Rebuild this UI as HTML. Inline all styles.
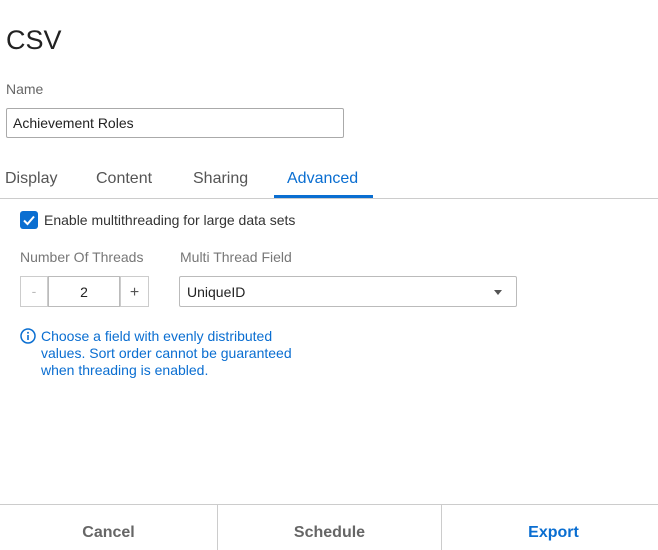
<!DOCTYPE html>
<html><head><style>
body{margin:0;width:658px;height:550px;background:#fff;font-family:"Liberation Sans",sans-serif;position:relative;overflow:hidden;color:#222}
.a{position:absolute;white-space:nowrap}
</style></head><body>
<div class="a" style="left:6px;top:25px;font-size:27px;color:#222">CSV</div>
<div class="a" style="left:6px;top:81px;font-size:14px;color:#666">Name</div>
<div class="a" style="left:6px;top:108px;width:336px;height:28px;border:1px solid #aaa;border-radius:2px"></div>
<div class="a" style="left:13px;top:115px;font-size:14px;color:#222">Achievement Roles</div>
<div class="a" style="left:5px;top:170px;font-size:16px;color:#555">Display</div>
<div class="a" style="left:96px;top:170px;font-size:16px;color:#555">Content</div>
<div class="a" style="left:193px;top:170px;font-size:16px;color:#555">Sharing</div>
<div class="a" style="left:287px;top:170px;font-size:16px;color:#0a6ed1">Advanced</div>
<div class="a" style="left:0;top:198px;width:658px;height:1px;background:#ccc"></div>
<div class="a" style="left:274px;top:195px;width:99px;height:3px;background:#0a6ed1"></div>
<div class="a" style="left:20px;top:211px;width:18px;height:18px;background:#0a6ed1;border-radius:3px"><svg width="18" height="18"><path d="M4 9.5l3.5 3.5L14 5.5" stroke="#fff" stroke-width="2" fill="none"/></svg></div>
<div class="a" style="left:44px;top:212px;font-size:14px;color:#333">Enable multithreading for large data sets</div>
<div class="a" style="left:20px;top:249px;font-size:14px;color:#777">Number Of Threads</div>
<div class="a" style="left:180px;top:249px;font-size:14px;color:#777">Multi Thread Field</div>
<div class="a" style="left:20px;top:276px;width:26px;height:29px;border:1px solid #ccc;text-align:center;line-height:29px;color:#bbb;font-size:14px">-</div>
<div class="a" style="left:48px;top:276px;width:70px;height:29px;border:1px solid #bbb;text-align:center;line-height:31px;font-size:14px">2</div>
<div class="a" style="left:120px;top:276px;width:27px;height:29px;border:1px solid #ccc;text-align:center;line-height:31px;color:#555;font-size:16px">+</div>
<div class="a" style="left:179px;top:276px;width:336px;height:29px;border:1px solid #bbb;border-radius:2px"></div>
<div class="a" style="left:187px;top:284px;font-size:14px;color:#222">UniqueID</div>
<div class="a" style="left:494px;top:290px;width:0;height:0;border-left:4px solid transparent;border-right:4px solid transparent;border-top:5px solid #555"></div>
<svg class="a" style="left:20px;top:328px" width="16" height="16"><circle cx="8" cy="8" r="7" stroke="#0a6ed1" stroke-width="1.5" fill="none"/><rect x="7.2" y="7" width="1.6" height="5" fill="#0a6ed1"/><circle cx="8" cy="4.8" r="1" fill="#0a6ed1"/></svg>
<div class="a" style="left:41px;top:328px;font-size:14px;line-height:17px;color:#0a6ed1">Choose a field with evenly distributed<br>values. Sort order cannot be guaranteed<br>when threading is enabled.</div>
<div class="a" style="left:0;top:504px;width:658px;height:1px;background:#ccc"></div>
<div class="a" style="left:217px;top:505px;width:1px;height:45px;background:#ccc"></div>
<div class="a" style="left:441px;top:505px;width:1px;height:45px;background:#ccc"></div>
<div class="a" style="left:0;top:524px;width:217px;text-align:center;font-size:16px;font-weight:bold;color:#666">Cancel</div>
<div class="a" style="left:218px;top:524px;width:223px;text-align:center;font-size:16px;font-weight:bold;color:#666">Schedule</div>
<div class="a" style="left:442px;top:524px;width:223px;text-align:center;font-size:16px;font-weight:bold;color:#0a6ed1">Export</div>
</body></html>
